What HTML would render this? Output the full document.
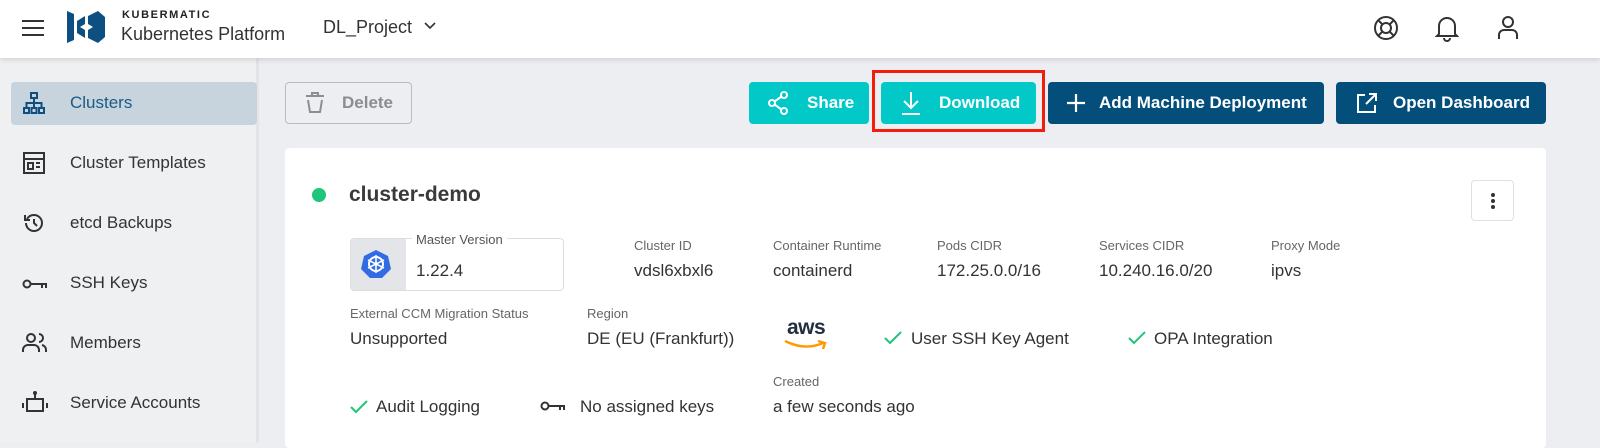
<!DOCTYPE html>
<html><head><style>
*{margin:0;padding:0;box-sizing:border-box}
body{width:1600px;height:442px;overflow:hidden;background:#eceef1;font-family:"Liberation Sans",sans-serif;color:#333;position:relative}
.a{position:absolute}
.hdr{left:0;top:0;width:1600px;height:58px;background:#fff;box-shadow:0 2px 5px rgba(0,0,0,.12);z-index:2}
.side{left:0;top:58px;width:259px;height:384px;background:#eef0f2;border-right:3px solid #e2e4e7}
.nav{left:70px;font-size:17px;color:#333}
.btn{height:42px;border-radius:4px;color:#fff;font-size:17px;font-weight:bold;display:flex;align-items:center}
.lbl{font-size:13px;color:#666}
.val{font-size:17px;color:#333}
</style></head><body>
<div class="a hdr">
 <div class="a" style="left:22px;top:20px;width:22px;height:2px;background:#333;box-shadow:0 7px 0 #333,0 14px 0 #333"></div>
 <svg class="a" style="left:66px;top:10px" width="40" height="34" viewBox="0 0 40 34"><path d="M1 1L8 4V30L1 33Z M11 11L19 6V14L14 17L19 20V28L11 23Z M22 6L32 1L39 7V27L32 33L22 28V20L27 17L22 14Z" fill="#0d4f80"/></svg>
 <div class="a" style="left:122px;top:9px;font-size:11px;font-weight:bold;letter-spacing:1.6px;color:#222">KUBERMATIC</div>
 <div class="a" style="left:121px;top:24px;font-size:18px;color:#333">Kubernetes Platform</div>
 <div class="a" style="left:323px;top:17px;font-size:18px;color:#333">DL_Project</div>
 <svg class="a" style="left:423px;top:21px" width="14" height="10"><path d="M2 2L7 7L12 2" stroke="#333" stroke-width="1.6" fill="none"/></svg>
 <svg class="a" style="left:1372px;top:14px" width="28" height="28" viewBox="0 0 28 28" fill="none" stroke="#333" stroke-width="2"><circle cx="14" cy="14" r="11"/><circle cx="14" cy="14" r="5"/><path d="M6 6L10 10M22 6L18 10M6 22L10 18M22 22L18 18"/></svg>
 <svg class="a" style="left:1435px;top:14px" width="24" height="28" viewBox="0 0 24 28" fill="none" stroke="#333" stroke-width="2"><path d="M4 20V12a8 8 0 0116 0v8l2 2H2z M9 24a3 3 0 006 0"/></svg>
 <svg class="a" style="left:1496px;top:14px" width="24" height="28" viewBox="0 0 24 28" fill="none" stroke="#333" stroke-width="2"><circle cx="12" cy="8" r="5"/><path d="M3 25v-4a5 5 0 015-5h8a5 5 0 015 5v4"/></svg>
</div>
<div class="a side">
 <div class="a" style="left:11px;top:24px;width:246px;height:43px;background:#c7d4de;border-radius:4px"></div>
</div>
<svg class="a" style="left:23px;top:92px" width="22" height="22" viewBox="0 0 22 22" fill="none" stroke="#0d4f80" stroke-width="2"><rect x="8" y="1" width="6" height="5"/><rect x="1" y="16" width="5" height="5"/><rect x="8.5" y="16" width="5" height="5"/><rect x="16" y="16" width="5" height="5"/><path d="M11 6V16M3.5 16V11H18.5V16"/></svg>
<div class="a nav" style="top:93px;color:#1b5a86">Clusters</div>
<svg class="a" style="left:23px;top:152px" width="22" height="22" viewBox="0 0 22 22" fill="none" stroke="#333" stroke-width="2"><rect x="1" y="1" width="20" height="20"/><path d="M1 7H21M5 11H10V17H5Z M13 11H17M13 15H17"/></svg>
<div class="a nav" style="top:153px">Cluster Templates</div>
<svg class="a" style="left:23px;top:212px" width="22" height="22" viewBox="0 0 22 22" fill="none" stroke="#333" stroke-width="2"><path d="M3 11a8 8 0 108-8 8 8 0 00-7 4M2 3V8H7M11 7V11L14 14"/></svg>
<div class="a nav" style="top:213px">etcd Backups</div>
<svg class="a" style="left:22px;top:278px" width="26" height="12" viewBox="0 0 26 12" fill="none" stroke="#333" stroke-width="2"><circle cx="5" cy="6" r="3.5"/><path d="M9 6H25M20 6V10M24 6V10"/></svg>
<div class="a nav" style="top:273px">SSH Keys</div>
<svg class="a" style="left:22px;top:332px" width="26" height="22" viewBox="0 0 26 22" fill="none" stroke="#333" stroke-width="2"><circle cx="9" cy="6" r="4"/><path d="M1 20v-2a5 5 0 015-5h6a5 5 0 015 5v2M17 2a4 4 0 010 8M20 13a5 5 0 014 5v2"/></svg>
<div class="a nav" style="top:333px">Members</div>
<svg class="a" style="left:22px;top:391px" width="26" height="24" viewBox="0 0 26 24" fill="none" stroke="#333" stroke-width="2"><rect x="5" y="8" width="16" height="12"/><path d="M13 2V8M1 12V17M25 12V17"/><circle cx="13" cy="2" r="1"/></svg>
<div class="a nav" style="top:393px">Service Accounts</div>

<div class="a btn" style="left:285px;top:82px;width:127px;border:1px solid #b8bcc0;background:#eceef1;color:#8a8e92;justify-content:center">
 <svg width="22" height="22" viewBox="0 0 22 22" fill="none" stroke="#8a8e92" stroke-width="2" style="margin-right:16px"><path d="M2 4H20M8 4V1H14V4M4 8L6 20H16L18 8"/></svg>Delete</div>
<div class="a btn" style="left:749px;top:82px;width:120px;background:#03c8c8;padding-left:18px">
 <svg width="24" height="24" viewBox="0 0 24 24" fill="none" stroke="#fff" stroke-width="2" style="margin-right:16px"><circle cx="5" cy="12" r="3"/><circle cx="17" cy="4" r="3"/><circle cx="17" cy="20" r="3"/><path d="M7.5 10.5L14.5 5.5M7.5 13.5L14.5 18.5"/></svg>Share</div>
<div class="a" style="left:872px;top:70px;width:173px;height:62px;border:3px solid #f41c0c"></div>
<div class="a btn" style="left:881px;top:82px;width:155px;background:#03c8c8;padding-left:19px">
 <svg width="22" height="24" viewBox="0 0 22 24" fill="none" stroke="#fff" stroke-width="2" style="margin-right:17px"><path d="M11 1V16M4 10L11 17L18 10M2 23H20"/></svg>Download</div>
<div class="a btn" style="left:1048px;top:82px;width:276px;background:#034e7b;padding-left:18px">
 <svg width="20" height="20" viewBox="0 0 20 20" fill="none" stroke="#fff" stroke-width="2.2" style="margin-right:13px"><path d="M10 1V19M1 10H19"/></svg>Add Machine Deployment</div>
<div class="a btn" style="left:1336px;top:82px;width:210px;background:#034e7b;padding-left:20px">
 <svg width="22" height="22" viewBox="0 0 22 22" fill="none" stroke="#fff" stroke-width="2" style="margin-right:15px"><path d="M9 3H2V20H19V13M13 2H20V9M20 2L10 12"/></svg>Open Dashboard</div>

<div class="a" style="left:285px;top:148px;width:1261px;height:300px;background:#fff;border-radius:4px"></div>
<div class="a" style="left:312px;top:188px;width:14px;height:14px;border-radius:50%;background:#1ec57a"></div>
<div class="a" style="left:349px;top:183px;font-size:21px;font-weight:bold;color:#3a3a3a">cluster-demo</div>
<div class="a" style="left:1471px;top:180px;width:43px;height:41px;border:1px solid #e0e0e0;border-radius:4px"></div>
<div class="a" style="left:1491px;top:193px;width:4px;height:4px;border-radius:50%;background:#333;box-shadow:0 6px 0 #333,0 12px 0 #333"></div>

<div class="a" style="left:350px;top:238px;width:214px;height:53px;border:1px solid #ddd;border-radius:4px;overflow:hidden"><div style="width:55px;height:100%;background:#e3e5e8"></div></div>
<svg class="a" style="left:361px;top:249px" width="30" height="30" viewBox="0 0 30 30"><path d="M15 1L27 7L30 20L21 29H9L0 20L3 7Z" fill="#326ce5"/><circle cx="15" cy="15" r="7" fill="none" stroke="#fff" stroke-width="2"/><path d="M15 6V24M7 11L23 19M7 19L23 11" stroke="#fff" stroke-width="1.6"/></svg>
<div class="a lbl" style="left:412px;top:232px;background:#fff;padding:0 4px;color:#555">Master Version</div>
<div class="a val" style="left:416px;top:261px">1.22.4</div>

<div class="a lbl" style="left:634px;top:238px">Cluster ID</div><div class="a val" style="left:634px;top:261px">vdsl6xbxl6</div>
<div class="a lbl" style="left:773px;top:238px">Container Runtime</div><div class="a val" style="left:773px;top:261px">containerd</div>
<div class="a lbl" style="left:937px;top:238px">Pods CIDR</div><div class="a val" style="left:937px;top:261px">172.25.0.0/16</div>
<div class="a lbl" style="left:1099px;top:238px">Services CIDR</div><div class="a val" style="left:1099px;top:261px">10.240.16.0/20</div>
<div class="a lbl" style="left:1271px;top:238px">Proxy Mode</div><div class="a val" style="left:1271px;top:261px">ipvs</div>

<div class="a lbl" style="left:350px;top:306px">External CCM Migration Status</div><div class="a val" style="left:350px;top:329px">Unsupported</div>
<div class="a lbl" style="left:587px;top:306px">Region</div><div class="a val" style="left:587px;top:329px">DE (EU (Frankfurt))</div>
<div class="a" style="left:787px;top:316px;font-size:21px;font-weight:bold;color:#232f3e;letter-spacing:-0.5px">aws</div>
<svg class="a" style="left:783px;top:339px" width="46" height="12"><path d="M2 2Q22 12 40 4M35 2L42 4L40 10" stroke="#ff9900" stroke-width="2.4" fill="none"/></svg>
<svg class="a" style="left:884px;top:331px" width="18" height="14"><path d="M1 7L6 12L17 1" stroke="#1ec57a" stroke-width="2" fill="none"/></svg>
<div class="a val" style="left:911px;top:329px">User SSH Key Agent</div>
<svg class="a" style="left:1128px;top:331px" width="18" height="14"><path d="M1 7L6 12L17 1" stroke="#1ec57a" stroke-width="2" fill="none"/></svg>
<div class="a val" style="left:1154px;top:329px">OPA Integration</div>

<div class="a lbl" style="left:773px;top:374px">Created</div>
<svg class="a" style="left:350px;top:400px" width="18" height="14"><path d="M1 7L6 12L17 1" stroke="#1ec57a" stroke-width="2" fill="none"/></svg>
<div class="a val" style="left:376px;top:397px">Audit Logging</div>
<svg class="a" style="left:540px;top:400px" width="26" height="12" viewBox="0 0 26 12" fill="none" stroke="#333" stroke-width="2"><circle cx="5" cy="6" r="3.5"/><path d="M9 6H25M20 6V10M24 6V10"/></svg>
<div class="a val" style="left:580px;top:397px">No assigned keys</div>
<div class="a val" style="left:773px;top:397px">a few seconds ago</div>
</body></html>
